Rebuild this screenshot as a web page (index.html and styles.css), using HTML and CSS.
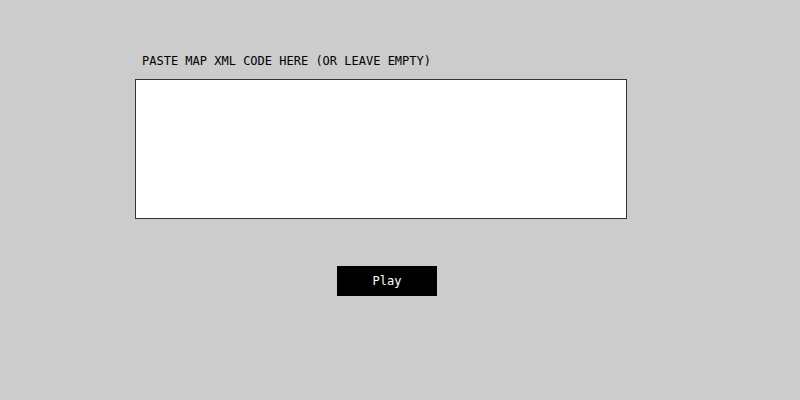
FILE: index.html
```html
<!DOCTYPE html>
<html>
<head>
<meta charset="utf-8">
<link rel="stylesheet" href="styles.css">
</head>
<body>
<div class="wrap">
  <label class="label" for="xml">PASTE MAP XML CODE HERE (OR LEAVE EMPTY)</label>
  <textarea id="xml" class="code"></textarea>
  <button class="play">Play</button>
</div>
</body>
</html>
```
FILE: styles.css
```css
html, body {
  margin: 0;
  padding: 0;
  background: #cccccc;
  width: 800px;
  height: 400px;
  overflow: hidden;
}
.wrap {
  display: flex;
  flex-direction: column;
  align-items: flex-start;
  padding: 54px 0 0 135px;
  font-family: "DejaVu Sans Mono", monospace;
  font-size: 12px;
}
.label {
  display: block;
  padding-left: 7px;
  line-height: 14px;
  color: #000;
  margin-bottom: 11px;
}
.code {
  box-sizing: border-box;
  width: 492px;
  height: 140px;
  margin: 0;
  border: 1px solid #333;
  background: #fff;
  resize: none;
  outline: none;
}
.play {
  margin: 47px 0 0 202px;
  width: 100px;
  height: 30px;
  padding: 0;
  border: none;
  background: #000;
  color: #fff;
  font-family: "DejaVu Sans Mono", monospace;
  font-size: 12px;
}
```
